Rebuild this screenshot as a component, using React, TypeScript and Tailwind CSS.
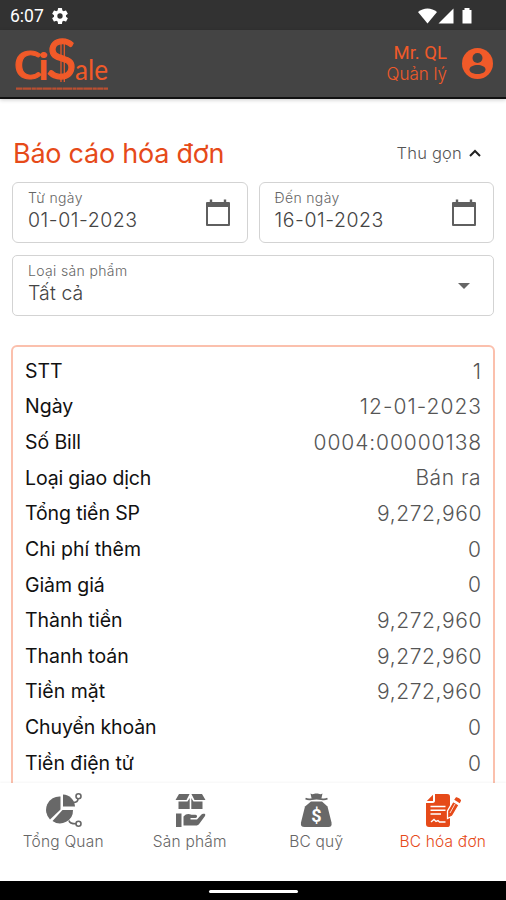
import type { ReactNode } from "react";

const rows: [string, string, string, string][] = [
  ["STT", "1", "tracking-normal", "tracking-normal"],
  ["Ngày", "12-01-2023", "tracking-normal", "tracking-[1px] -mr-px"],
  ["Số Bill", "0004:00000138", "tracking-[-0.1px]", "tracking-[0.9px] -mr-px"],
  ["Loại giao dịch", "Bán ra", "tracking-[-0.14px]", "tracking-[0.5px]"],
  ["Tổng tiền SP", "9,272,960", "tracking-[-0.1px]", "tracking-[0.6px] -mr-px"],
  ["Chi phí thêm", "0", "tracking-normal", "tracking-normal"],
  ["Giảm giá", "0", "tracking-[-0.1px]", "tracking-normal"],
  ["Thành tiền", "9,272,960", "tracking-normal", "tracking-[0.6px] -mr-px"],
  ["Thanh toán", "9,272,960", "tracking-[-0.05px]", "tracking-[0.6px] -mr-px"],
  ["Tiền mặt", "9,272,960", "tracking-normal", "tracking-[0.6px] -mr-px"],
  ["Chuyển khoản", "0", "tracking-[-0.12px]", "tracking-normal"],
  ["Tiền điện tử", "0", "tracking-[-0.1px]", "tracking-normal"],
];

function Gear() {
  return (
    <svg className="ml-[6px] size-[20px]" viewBox="0 0 24 24" fill="#fff">
      <path d="M19.14 12.94c.04-.3.06-.61.06-.94s-.02-.64-.07-.94l2.03-1.58a.49.49 0 0 0 .12-.61l-1.92-3.32a.49.49 0 0 0-.59-.22l-2.39.96a7 7 0 0 0-1.62-.94l-.36-2.54a.48.48 0 0 0-.48-.41h-3.84a.48.48 0 0 0-.47.41l-.36 2.54c-.59.24-1.13.57-1.62.94l-2.39-.96a.48.48 0 0 0-.59.22L2.74 8.87a.48.48 0 0 0 .12.61l2.03 1.58c-.05.3-.09.63-.09.94s.02.64.07.94l-2.03 1.58a.49.49 0 0 0-.12.61l1.92 3.32c.12.22.37.29.59.22l2.39-.96c.5.38 1.03.7 1.62.94l.36 2.54c.05.24.24.41.48.41h3.84c.24 0 .44-.17.47-.41l.36-2.54c.59-.24 1.13-.56 1.62-.94l2.39.96c.22.08.47 0 .59-.22l1.92-3.32a.48.48 0 0 0-.12-.61zM12 15.2A3.2 3.2 0 1 1 12 8.8a3.2 3.2 0 0 1 0 6.4z" />
    </svg>
  );
}

function Logo() {
  return (
    <svg className="h-[60px] w-[96px] overflow-visible" viewBox="14 35 96 60" fill="#f15a29">
      <g fontFamily="Lato, sans-serif">
        <text x="13.5" y="80.3" fontSize="55" textLength="29" lengthAdjust="spacingAndGlyphs" stroke="#f15a29" strokeWidth="1.1">c</text>
        <text x="38" y="80.5" fontSize="38" textLength="11" lengthAdjust="spacingAndGlyphs" fontWeight="700">i</text>
        <text x="46.500" y="80" fontSize="57" textLength="30" lengthAdjust="spacingAndGlyphs" stroke="#f15a29" strokeWidth="1.3">S</text>
        <text x="75" y="80.5" fontSize="28" textLength="33" lengthAdjust="spacingAndGlyphs">ale</text>
      </g>
      <path d="M61 41V83M64.300 41V83" stroke="#f15a29" strokeWidth="1.2" />
      <path d="M16 89.700H108" stroke="#b94f31" strokeWidth="2.200" strokeDasharray="6 .4 9 .5 4 .4" />
    </svg>
  );
}

function CalendarIcon() {
  return (
    <svg className="h-[28px] w-[26px] shrink-0" viewBox="0 0 26 28" fill="none" stroke="#5f5f5f">
      <path d="M2 4H24V26H2Z" strokeWidth="2" strokeLinejoin="round" />
      <path d="M2 3H24V8H2Z" fill="#5f5f5f" stroke="none" />
      <path d="M6 .5V4M20 .5V4" strokeWidth="2.4" />
    </svg>
  );
}

function DateField({ label, value }: { label: string; value: string }) {
  return (
    <div className="flex h-[61px] flex-1 items-center justify-between rounded-[6px] border-[1.5px] border-[#d3d3d3] pr-[16px] pl-[15px]">
      <div className="flex flex-col pb-[3px]">
        <span className="text-[14px] leading-[18px] font-light tracking-[0.35px] text-[#666]">{label}</span>
        <span className="text-[19.5px] leading-[26px] font-light tracking-[0.55px] text-[#444]">{value}</span>
      </div>
      <CalendarIcon />
    </div>
  );
}

function ChartIcon() {
  return (
    <svg className="h-[38px] w-[38px]" viewBox="0 0 38 38" fill="#686868">
      <path d="M16.500 5.500V18.500L6 28.500A13.500 13.500 0 0 1 16.500 5.500Z" />
      <path d="M19 3.500A12.500 12.500 0 0 1 31 15.500H19Z" />
      <path d="M18.500 19H29A13 13 0 0 1 8.500 30Z" />
      <g fill="none" stroke="#686868" strokeWidth="1.6">
        <circle cx="34.500" cy="5.200" r="2.500" />
        <circle cx="34.500" cy="32.800" r="2.500" />
        <path d="M34 7.800C34 10.500 32.500 11.500 29 11.500M25 29.500C25.500 32.500 28 32.800 32 32.800" />
      </g>
    </svg>
  );
}

function ProductIcon() {
  return (
    <svg className="h-[38px] w-[38px]" viewBox="0 0 38 38" fill="#686868">
      <path d="M8 3H18.600L15.500 9H4.500ZM20.400 3H31L34.500 9H23.500Z" />
      <path d="M7.500 10.500H16.500L18.700 7V18H7.500ZM20.300 7L22.500 10.500H31.500V18H20.300Z" />
      <path d="M5 22.500H10.500V36H5Z" />
      <path d="M12.500 25.500C15 22.300 18 22.500 20.500 23.800H24.500C26.500 23.800 26.500 27 24.500 27H19.500V28.500H26L30 24C31 22.800 35.500 21.800 34 25L28.500 32.500C27.500 34 26.500 34.500 24.500 34.500H12.500Z" />
    </svg>
  );
}

function MoneyIcon() {
  return (
    <svg className="h-[38px] w-[38px]" viewBox="0 0 38 38" fill="#686868">
      <path d="M13.500 2.500C16 4 17 2.500 19.500 2.500S23 4 25.500 2.500L24.500 7H14.500Z" />
      <path d="M8.500 7.500C12.500 9.500 14 7.500 19.500 7.500S26.500 9.500 30.500 7.500" fill="none" stroke="#686868" strokeWidth="1.8" />
      <path d="M14 10.500H25L30.500 15.500L34.500 31.500C35 34.500 34 36 31.500 36H7.500C4.500 36 3.500 34.500 4 31.500L8 15.500Z" />
      <text x="19.300" y="31" textAnchor="middle" fontFamily="Roboto, sans-serif" fontWeight="700" fontSize="18" fill="#fff">$</text>
    </svg>
  );
}

function InvoiceIcon() {
  return (
    <svg className="h-[38px] w-[38px]" viewBox="0 0 38 38" fill="#e64a19">
      <path d="M11 3H23C25.500 3 26 4 26 6V33C26 35.500 25 36 23 36H5C3 36 2 35 2 33V12H8.500C10.500 12 11 11 11 9.500ZM9 3.800V10H2.800Z" />
      <path d="M6.500 15.500H21.500M6.500 19.200H21.500M6.500 23H17" stroke="#fff" strokeWidth="1.4" />
      <path d="M7 31L10 28.500L12 30.500L14 29.500L15.500 31H21.500" fill="none" stroke="#fff" strokeWidth="1.4" />
      <path d="M29 10.500L35 14L28.500 25L23.500 27.500V20Z" stroke="#fff" strokeWidth="1.3" />
      <path d="M30.200 8.800L31.800 6.500C32.500 5.500 37.500 8.500 37 9.700L35.800 12.200Z" />
      <path d="M31 13L26 22" stroke="#fff" strokeWidth=".8" />
    </svg>
  );
}

function Tab({ icon, label, active }: { icon: ReactNode; label: string; active?: boolean }) {
  return (
    <div className={`flex flex-1 flex-col items-center pt-[8px] ${active ? "text-[#e64a19]" : "text-[#666]"}`}>
      {icon}
      <span className="mt-[2px] text-[15.5px] leading-[22px] font-light tracking-[0.2px] whitespace-nowrap">{label}</span>
    </div>
  );
}

export default function App() {
  return (
    <div className="flex h-[900px] w-[506px] flex-col overflow-hidden bg-white font-['Inter','Noto_Sans',sans-serif]">
      <div className="flex h-[30px] shrink-0 items-center bg-[#323232] pt-[2px] pr-[32px] pl-[10px]">
        <span className="font-['Roboto',sans-serif] text-[17.5px] text-white">6:07</span>
        <Gear />
        <svg className="ml-auto h-[18px] w-[56px]" viewBox="0 0 56 18" fill="#fff">
          <path d="M0 5C5.500 .2 13.500 .2 19 5L9.500 16.500Z" />
          <path d="M20.500 16.500L35.500 1.500V16.500Z" />
          <path d="M44.500 3H46.500V1H51.500V3H53.500V16.500H44.500Z" />
        </svg>
      </div>
      <header className="flex h-[69px] shrink-0 items-center justify-between border-b-2 border-[#111] bg-[#444] pr-[13px] pl-[14px] text-[#f15a29] shadow-[0_1px_4px_rgba(0,0,0,0.2)]">
        <Logo />
        <div className="flex items-center gap-[15px]">
          <div className="flex flex-col items-end pt-px">
            <span className="font-['Roboto',sans-serif] text-[18.5px] leading-[21px]">Mr. QL</span>
            <span className="text-[17px] leading-[21px] font-light">Quản lý</span>
          </div>
          <svg className="size-[31px]" viewBox="0 0 31 31">
            <circle cx="15.500" cy="15.500" r="15.500" fill="#f15a29" />
            <circle cx="15.500" cy="10" r="5" fill="#444" />
            <path d="M7.500 21.500C7.500 15.500 23.500 15.500 23.500 21.500C23.500 27.500 7.500 27.500 7.500 21.500Z" fill="#444" />
          </svg>
        </div>
      </header>
      <main className="flex min-h-0 flex-1 flex-col overflow-hidden px-[12px] pt-[37px]">
        <div className="flex h-[36px] items-center justify-between pr-[13px]">
          <h1 className="pl-px text-[27px] leading-[36px] tracking-[-0.25px] text-[#e64a19]">Báo cáo hóa đơn</h1>
          <div className="flex items-center gap-[7px] pb-[2px] text-[16.5px] font-light tracking-[0.2px] text-[#555]">
            <span>Thu gọn</span>
            <svg className="h-[8px] w-[12px]" viewBox="0 0 12 8" fill="none" stroke="#222" strokeWidth="2">
              <path d="M1 7L6 2L11 7" />
            </svg>
          </div>
        </div>
        <div className="mt-[10px] flex shrink-0 gap-[11px]">
          <DateField label="Từ ngày" value="01-01-2023" />
          <DateField label="Đến ngày" value="16-01-2023" />
        </div>
        <div className="mt-[12px] flex h-[61px] shrink-0 items-center justify-between rounded-[5px] border-[1.5px] border-[#d3d3d3] pr-[23px] pl-[15px]">
          <div className="flex flex-col pb-[4px]">
            <span className="text-[14px] leading-[18px] font-light tracking-[0.35px] text-[#666]">Loại sản phẩm</span>
            <span className="text-[19.5px] leading-[26px] font-light tracking-[0.1px] text-[#444]">Tất cả</span>
          </div>
          <svg className="h-[6px] w-[12px]" viewBox="0 0 12 6" fill="#666"><path d="M0 0H12L6 6Z" /></svg>
        </div>
        <div className="mt-[29px] -mx-px h-[460px] shrink-0 rounded-[6px] border-2 border-[#fbc0ad] px-[12px] pt-[6.5px]">
          {rows.map(([label, value, labelClass, valueClass]) => (
            <div key={label} className="flex h-[35.65px] items-center justify-between">
              <span className={`text-[19.5px] text-[#111] ${labelClass}`}>{label}</span>
              <span className={`text-[21px] font-light text-[#555] ${valueClass}`}>{value}</span>
            </div>
          ))}
        </div>
      </main>
      <nav className="relative flex h-[98px] shrink-0 bg-white shadow-[0_-1px_2px_rgba(0,0,0,0.04)]">
        <Tab icon={<ChartIcon />} label="Tổng Quan" />
        <Tab icon={<ProductIcon />} label="Sản phẩm" />
        <Tab icon={<MoneyIcon />} label="BC quỹ" />
        <Tab icon={<InvoiceIcon />} label="BC hóa đơn" active />
      </nav>
      <div className="flex h-[19px] shrink-0 items-center justify-center bg-black pt-[2px]">
        <div className="h-[3px] w-[89px] rounded-full bg-white" />
      </div>
    </div>
  );
}
